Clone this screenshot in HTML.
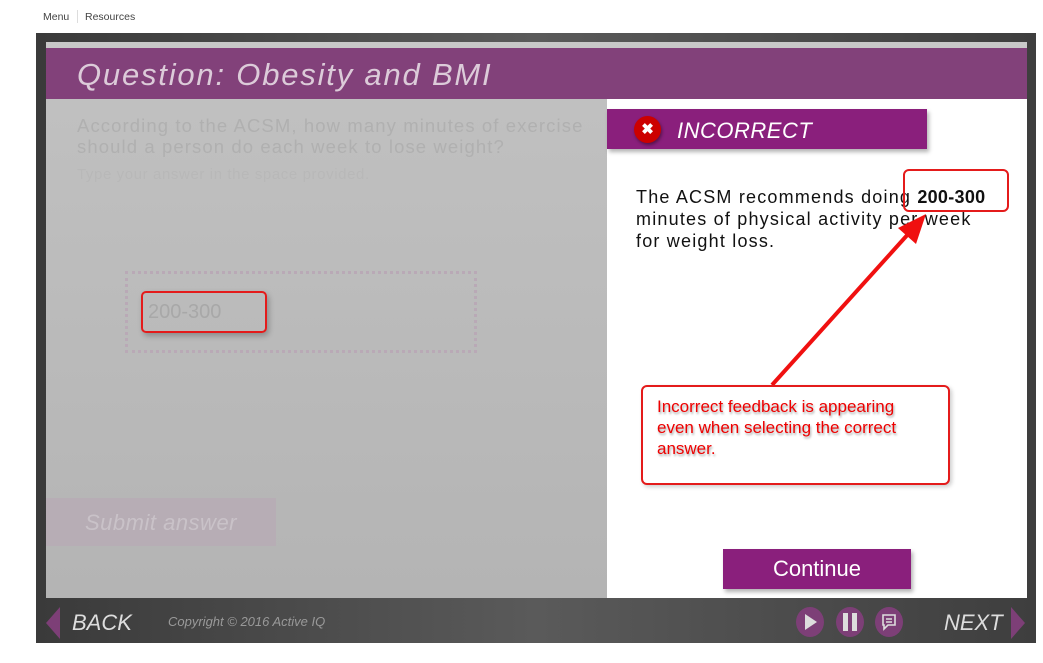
<!DOCTYPE html>
<html><head><style>
*{margin:0;padding:0;box-sizing:border-box}
body{width:1043px;height:663px;background:#fff;position:relative;overflow:hidden;font-family:"Liberation Sans",sans-serif}
.a{position:absolute}
</style></head><body>
<div class="a" style="left:43px;top:11px;font-size:10.5px;color:#444">Menu</div>
<div class="a" style="left:77px;top:10px;width:1px;height:13px;background:#ddd"></div>
<div class="a" style="left:85px;top:11px;font-size:10.5px;color:#444">Resources</div>

<div class="a" style="left:36px;top:33px;width:1000px;height:610px;background:linear-gradient(90deg,#3a3a3a,#5a5a5a 50%,#3e3e3e)"></div>
<div class="a" style="left:46px;top:42px;width:981px;height:7px;background:#c8c8c8"></div>
<div class="a" style="left:46px;top:48px;width:981px;height:51px;background:#82417a"></div>
<div class="a" style="left:77px;top:57px;font-size:31px;font-style:italic;color:#dccbd9;letter-spacing:1.8px">Question: Obesity and BMI</div>

<div class="a" style="left:46px;top:99px;width:561px;height:499px;background:linear-gradient(#c0c0c0,#b4b4b4)"></div>
<div class="a" style="left:77px;top:115px;font-size:18.5px;color:#b0b0b0;line-height:21px;width:530px;letter-spacing:1.1px">According to the ACSM, how many minutes of exercise<br>should a person do each week to lose weight?</div>
<div class="a" style="left:77px;top:166px;font-size:15px;color:#b8b8b8;letter-spacing:0.6px">Type your answer in the space provided.</div>
<div class="a" style="left:125px;top:271px;width:352px;height:82px;border:3px dotted #b9a9b6"></div>
<div class="a" style="left:141px;top:291px;width:126px;height:42px;border:2px solid #e41b1b;border-radius:5px;box-shadow:2px 3px 6px rgba(0,0,0,.25)"></div>
<div class="a" style="left:148px;top:301px;font-size:20px;color:#a8a8a8">200-300</div>
<div class="a" style="left:46px;top:498px;width:230px;height:48px;background:#b7adb5"></div>
<div class="a" style="left:85px;top:510px;font-size:22px;font-style:italic;color:#c9c2c8;letter-spacing:0.5px">Submit answer</div>

<div class="a" style="left:607px;top:99px;width:420px;height:499px;background:#fff"></div>
<div class="a" style="left:607px;top:109px;width:320px;height:40px;background:#8a1f7c;box-shadow:2px 3px 4px rgba(0,0,0,.3)"></div>
<div class="a" style="left:634px;top:116px;width:27px;height:27px;border-radius:50%;background:#c00;box-shadow:1px 2px 3px rgba(0,0,0,.4);color:#fff;font-weight:bold;font-size:15px;text-align:center;line-height:27px">✖</div>
<div class="a" style="left:677px;top:118px;font-size:22px;font-style:italic;color:#fff;letter-spacing:0.5px">INCORRECT</div>
<div class="a" style="left:636px;top:186px;font-size:18px;color:#111;line-height:22px;width:400px;letter-spacing:1.2px">The ACSM recommends doing <b style="letter-spacing:0.3px">200-300</b><br>minutes of physical activity per week<br>for weight loss.</div>
<div class="a" style="left:903px;top:169px;width:106px;height:43px;border:2px solid #e41b1b;border-radius:6px"></div>
<div class="a" style="left:723px;top:549px;width:188px;height:40px;background:#8a1f7c;box-shadow:2px 3px 4px rgba(0,0,0,.3);color:#fff;font-size:22px;text-align:center;line-height:40px">Continue</div>

<svg class="a" style="left:0;top:0" width="1043" height="663">
<line x1="772" y1="385" x2="910" y2="232" stroke="#f01010" stroke-width="4"/>
<polygon points="926,214 898,228 916,244" fill="#f01010"/>
</svg>
<div class="a" style="left:641px;top:385px;width:309px;height:100px;border:2px solid #e41b1b;border-radius:6px;background:#fff;box-shadow:2px 2px 4px rgba(0,0,0,.2)"></div>
<div class="a" style="left:657px;top:396px;font-size:17px;color:#e00;line-height:21px;text-shadow:1px 2px 2px rgba(0,0,0,.35)">Incorrect feedback is appearing<br>even when selecting the correct<br>answer.</div>

<svg class="a" style="left:44px;top:607px" width="20" height="32"><polygon points="16,0 16,32 2,16" fill="#7d3f77"/></svg>
<div class="a" style="left:72px;top:610px;font-size:22px;font-style:italic;color:#ddd">BACK</div>
<div class="a" style="left:168px;top:614px;font-size:13px;font-style:italic;color:#999">Copyright © 2016 Active IQ</div>
<div class="a" style="left:796px;top:607px;width:28px;height:30px;border-radius:50%;background:#7d3f77"></div>
<svg class="a" style="left:803px;top:613px" width="16" height="18"><polygon points="2,1 14,9 2,17" fill="#ddd"/></svg>
<div class="a" style="left:836px;top:607px;width:28px;height:30px;border-radius:50%;background:#7d3f77"></div>
<div class="a" style="left:843px;top:613px;width:5px;height:18px;background:#ddd"></div>
<div class="a" style="left:852px;top:613px;width:5px;height:18px;background:#ddd"></div>
<div class="a" style="left:875px;top:607px;width:28px;height:30px;border-radius:50%;background:#7d3f77"></div>
<svg class="a" style="left:880px;top:613px" width="18" height="18"><path d="M3 2h12v10H8l-4 4v-4H3z" fill="none" stroke="#ddd" stroke-width="1.6"/><path d="M6 6h6M6 9h6" stroke="#ddd" stroke-width="1.4"/></svg>
<div class="a" style="left:944px;top:610px;font-size:22px;font-style:italic;color:#ddd">NEXT</div>
<svg class="a" style="left:1008px;top:607px" width="20" height="32"><polygon points="3,0 3,32 17,16" fill="#7d3f77"/></svg>
</body></html>
